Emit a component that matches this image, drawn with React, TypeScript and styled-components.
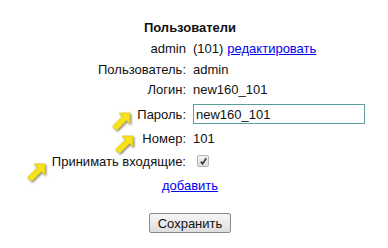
import React from "react";
import styled, { createGlobalStyle } from "styled-components";

const Global = createGlobalStyle`
  html, body { margin: 0; padding: 0; background: #fff; }
  body { font-family: "Liberation Sans", Arial, sans-serif; font-size: 13px; color: #111; }
`;

const Page = styled.div`
  position: relative;
  width: 388px;
  height: 248px;
  overflow: hidden;
`;

const Form = styled.form`
  width: 380px;
  padding-top: 18px;
  display: flex;
  flex-direction: column;
  align-items: stretch;
`;

const Title = styled.div`
  height: 20px;
  line-height: 20px;
  font-weight: bold;
  text-align: center;
`;

const Table = styled.div`
  display: grid;
  grid-template-columns: 186px 1fr;
  grid-template-rows: 21px 21px 19px 30px 18px 28px;
  column-gap: 7px;
  align-items: center;
`;

const Label = styled.div`
  text-align: right;
  white-space: nowrap;
`;

const Value = styled.div`
  display: flex;
  align-items: center;
  white-space: nowrap;
  gap: 4px;
`;

const Link = styled.a`
  color: #0000ee;
  text-decoration: underline;
  cursor: pointer;
`;

const AddRow = styled.div`
  height: 20px;
  display: flex;
  align-items: center;
  justify-content: center;
`;

const TextInput = styled.input`
  box-sizing: border-box;
  width: 172px;
  height: 20px;
  margin: 0;
  padding: 0 2px;
  border: 1px solid #5b9e9c;
  outline: none;
  font-family: "Liberation Sans", Arial, sans-serif;
  font-size: 13px;
  color: #111;
  background: #fff;
`;

const Check = styled.input`
  appearance: none;
  -webkit-appearance: none;
  box-sizing: border-box;
  width: 12px;
  height: 12px;
  margin: 0 0 0 4px;
  border: 1px solid #b4b4b4;
  border-radius: 2px;
  background: linear-gradient(#f4f4f4, #dcdcdc);
  position: relative;
  &::after {
    content: "";
    position: absolute;
    left: 2px;
    top: 1px;
    width: 7px;
    height: 8px;
    background: no-repeat center/contain
      url("data:image/svg+xml,%3Csvg xmlns='http://www.w3.org/2000/svg' viewBox='0 0 7 8'%3E%3Cpath d='M0.8 4.6 L2.6 6.8 L6.3 1.2' fill='none' stroke='%23444' stroke-width='1.8'/%3E%3C/svg%3E");
  }
`;

const ButtonRow = styled.div`
  margin-top: 18px;
  display: flex;
  justify-content: center;
`;

const Button = styled.button`
  box-sizing: border-box;
  width: 82px;
  height: 20px;
  padding: 0;
  border: 1px solid #8a8a8a;
  border-radius: 2px;
  background: linear-gradient(#f6f6f6, #dedede);
  font-family: "Liberation Sans", Arial, sans-serif;
  font-size: 13px;
  color: #111;
`;

const ArrowWrap = styled.svg<{ $x: number; $y: number }>`
  position: absolute;
  left: ${(p) => p.$x}px;
  top: ${(p) => p.$y}px;
  width: 22px;
  height: 22px;
  filter: drop-shadow(1px 1.5px 0.8px rgba(0, 0, 0, 0.5));
`;

const Arrow = ({ x, y }: { x: number; y: number }) => (
  <ArrowWrap $x={x} $y={y} viewBox="0 0 22 22">
    <polygon
      points="20,2 20,13 16.6,9.6 6.7,19.5 2.5,15.3 12.4,5.4 9,2"
      fill="#f5e21a"
      stroke="#dcc600"
      strokeWidth="0.6"
      strokeLinejoin="round"
    />
  </ArrowWrap>
);

export default function App() {
  return (
    <Page>
      <Global />
      <Form onSubmit={(e) => e.preventDefault()}>
        <Title>Пользователи</Title>
        <Table>
          <Label>admin</Label>
          <Value>
            (101) <Link>редактировать</Link>
          </Value>
          <Label>Пользователь:</Label>
          <Value>admin</Value>
          <Label>Логин:</Label>
          <Value>new160_101</Value>
          <Label>Пароль:</Label>
          <Value>
            <TextInput defaultValue="new160_101" />
          </Value>
          <Label>Номер:</Label>
          <Value>101</Value>
          <Label>Принимать входящие:</Label>
          <Value>
            <Check type="checkbox" defaultChecked />
          </Value>
        </Table>
        <AddRow>
          <Link>добавить</Link>
        </AddRow>
        <ButtonRow>
          <Button type="submit">Сохранить</Button>
        </ButtonRow>
      </Form>
      <Arrow x={110} y={111} />
      <Arrow x={113} y={134} />
      <Arrow x={25} y={162} />
    </Page>
  );
}
